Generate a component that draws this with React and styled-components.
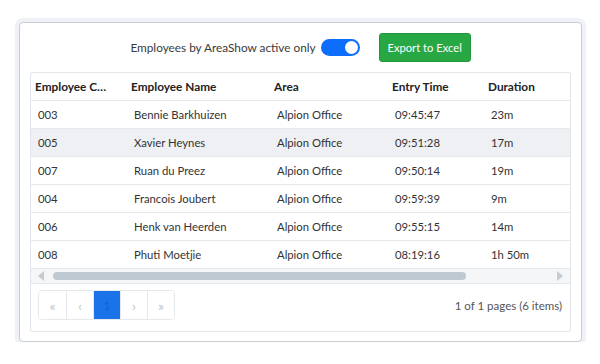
import React, { useState } from 'react';
import styled, { createGlobalStyle } from 'styled-components';

const GlobalStyle = createGlobalStyle`
  body {
    margin: 0;
    background: #ffffff;
    font-family: Lato, "Open Sans", sans-serif;
    color: #333;
  }
`;

const Page = styled.div`
  padding: 22px 0 0 19px;
`;

const Card = styled.div`
  box-sizing: border-box;
  width: 563px;
  height: 320px;
  padding: 10px;
  border: 1px solid #c9ced3;
  border-radius: 4px;
  box-shadow: 0 0 0 4px #eef2f6;
  background: #fff;
`;

const Toolbar = styled.div`
  display: flex;
  justify-content: center;
  align-items: center;
  height: 29px;
  margin-bottom: 10px;
`;

const Label = styled.span`
  font-size: 11.8px;
  color: #3a3a3a;
`;

const Switch = styled.button`
  position: relative;
  width: 39px;
  height: 17px;
  margin: 0 19px 0 5px;
  padding: 0;
  border: none;
  border-radius: 9px;
  background: ${p => (p.on ? '#0d6efd' : '#ced4da')};
  cursor: pointer;

  &::after {
    content: '';
    position: absolute;
    top: 2px;
    left: ${p => (p.on ? '24px' : '2px')};
    width: 13px;
    height: 13px;
    border-radius: 50%;
    background: #fff;
  }
`;

const ExportButton = styled.button`
  width: 92px;
  height: 29px;
  padding: 0;
  border: 1px solid #23953d;
  border-radius: 3px;
  background: #28a745;
  color: #fff;
  font-family: inherit;
  font-size: 11.2px;
  white-space: nowrap;
  cursor: pointer;
`;

const Grid = styled.div`
  border: 1px solid #e3e6e9;
  border-radius: 2px;
`;

const Viewport = styled.div`
  overflow: hidden;
`;

const Table = styled.div`
  width: 665px;
`;

const Row = styled.div`
  display: grid;
  grid-template-columns: 96px 143px 118px 96px 96px 116px;
  height: 27px;
  align-items: center;
  border-bottom: 1px solid #e6e9ec;
  background: ${p => (p.highlight ? '#eef0f3' : 'transparent')};
`;

const HeadCell = styled.div`
  padding: 0 18px 0 4px;
  font-size: 11.8px;
  font-weight: 700;
  color: #222;
  white-space: nowrap;
  overflow: hidden;
  text-overflow: ellipsis;
`;

const Cell = styled.div`
  padding: 0 7px;
  font-size: 11.3px;
  color: #333;
  white-space: nowrap;
  overflow: hidden;
`;

const ScrollBar = styled.div`
  display: flex;
  align-items: center;
  height: 14px;
  padding: 0 7px;
  background: #f4f6f8;
  border-bottom: 1px solid #e6e9ec;
`;

const Arrow = styled.span`
  width: 0;
  height: 0;
  border-top: 5px solid transparent;
  border-bottom: 5px solid transparent;
  ${p => (p.dir === 'left'
    ? 'border-right: 6px solid #c3ccd3;'
    : 'border-left: 6px solid #c3ccd3;')}
`;

const Track = styled.div`
  flex: 1;
  margin: 0 7px 0 9px;
`;

const Thumb = styled.div`
  height: 8px;
  border-radius: 4px;
  background: #bfc9d1;
`;

const Footer = styled.div`
  display: flex;
  justify-content: space-between;
  align-items: center;
  padding: 6px 8px 11px 7px;
`;

const Pager = styled.div`
  display: flex;
  border: 1px solid #e6e9ec;
  border-radius: 4px;
  overflow: hidden;
`;

const PageButton = styled.button`
  width: 27px;
  height: 28px;
  padding: 0;
  border: none;
  border-left: ${p => (p.first ? 'none' : '1px solid #e6e9ec')};
  background: ${p => (p.active ? '#1a73e8' : '#fff')};
  color: ${p => (p.active ? '#1660cc' : '#bfc4c9')};
  font-family: inherit;
  font-size: ${p => (p.active ? '11px' : '14px')};
  cursor: pointer;
`;

const Summary = styled.span`
  font-size: 11.5px;
  color: #555;
`;

const rows = [
  ['003', 'Bennie Barkhuizen', 'Alpion Office', '09:45:47', '23m'],
  ['005', 'Xavier Heynes', 'Alpion Office', '09:51:28', '17m'],
  ['007', 'Ruan du Preez', 'Alpion Office', '09:50:14', '19m'],
  ['004', 'Francois Joubert', 'Alpion Office', '09:59:39', '9m'],
  ['006', 'Henk van Heerden', 'Alpion Office', '09:55:15', '14m'],
  ['008', 'Phuti Moetjie', 'Alpion Office', '08:19:16', '1h 50m'],
];

const App = () => {
  const [activeOnly, setActiveOnly] = useState(true);

  return (
    <Page>
      <GlobalStyle />
      <Card>
        <Toolbar>
          <Label>Employees by AreaShow active only</Label>
          <Switch on={activeOnly ? 1 : 0} onClick={() => setActiveOnly(!activeOnly)} />
          <ExportButton>Export to Excel</ExportButton>
        </Toolbar>

        <Grid>
          <Viewport>
            <Table>
              <Row>
                <HeadCell>Employee Code</HeadCell>
                <HeadCell>Employee Name</HeadCell>
                <HeadCell>Area</HeadCell>
                <HeadCell>Entry Time</HeadCell>
                <HeadCell>Duration</HeadCell>
                <HeadCell />
              </Row>
              {rows.map((r, i) => (
                <Row key={r[0]} highlight={i === 1 ? 1 : 0}>
                  {r.map((v, j) => <Cell key={j}>{v}</Cell>)}
                  <Cell />
                </Row>
              ))}
            </Table>
          </Viewport>

          <ScrollBar>
            <Arrow dir="left" />
            <Track>
              <Thumb style={{ width: '83%' }} />
            </Track>
            <Arrow dir="right" />
          </ScrollBar>

          <Footer>
            <Pager>
              <PageButton first={1}>«</PageButton>
              <PageButton>‹</PageButton>
              <PageButton active={1}>1</PageButton>
              <PageButton>›</PageButton>
              <PageButton>»</PageButton>
            </Pager>
            <Summary>1 of 1 pages (6 items)</Summary>
          </Footer>
        </Grid>
      </Card>
    </Page>
  );
};

export default App;
